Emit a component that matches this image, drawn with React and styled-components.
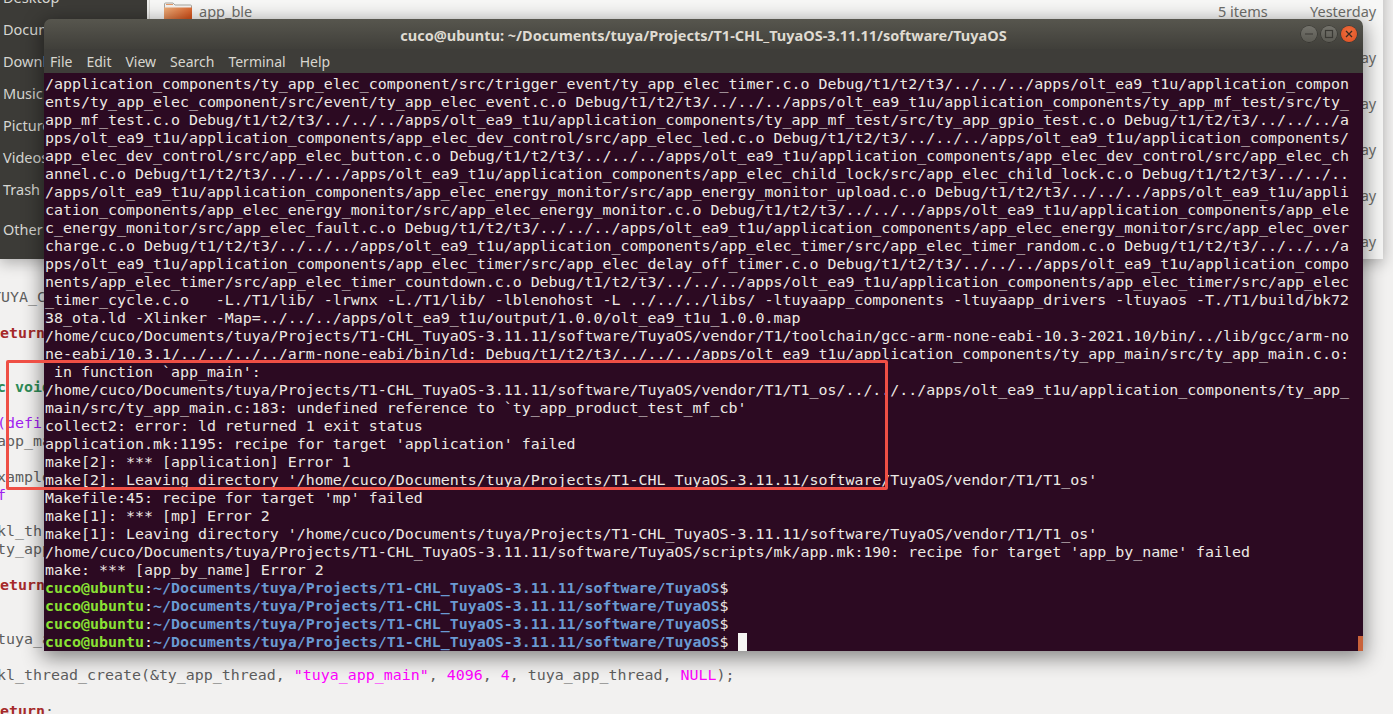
import React from "react";
import styled, { createGlobalStyle } from "styled-components";

const MONO = `"DejaVu Sans Mono", "Liberation Mono", monospace`;
const UI = `"Noto Sans", "Open Sans", sans-serif`;

const Global = createGlobalStyle`
  html, body { margin: 0; padding: 0; }
  body { width: 1393px; height: 714px; overflow: hidden; background: #f2f1f0; }
`;

const Desktop = styled.div`
  position: relative;
  width: 1393px;
  height: 714px;
  overflow: hidden;
  background: #f2f1f0;
`;

/* ---------- code editor behind everything ---------- */
const Editor = styled.div`
  position: absolute;
  left: -3px;
  top: 252px;
  width: 900px;
  font: 14.95px/18px ${MONO};
  color: #5e5e5e;
  white-space: pre;
`;
const CodeLine = styled.div`
  height: 18px;
  margin-left: ${(p) => p.$indent || 0}px;
`;
const Kw = styled.span`
  color: ${(p) => p.$c};
  font-weight: ${(p) => (p.$b ? 700 : 400)};
`;

/* ---------- file manager ---------- */
const Files = styled.div`
  position: absolute;
  left: 0;
  top: -23px;
  width: 1383px;
  height: 282px;
  display: flex;
  box-shadow: 0 4px 14px rgba(0, 0, 0, 0.28);
  background: #f0f0ee;
`;
const Sidebar = styled.div`
  width: 147px;
  flex: none;
  background: #3c3b37;
  color: #d6d6d2;
  font: 14.5px/20px ${UI};
  padding: 4px 0 0 3px;
  box-sizing: border-box;
`;
const Place = styled.div`
  height: 32px;
  line-height: 32px;
  margin-top: ${(p) => p.$gap || 0}px;
`;
const FileList = styled.div`
  flex: 1;
  background: #f7f7f6;
  margin-left: 2px;
  padding-top: 11px;
  border-left: 1px solid #d8d7d3;
  font: 14.5px/46px ${UI};
  color: #6f6f6b;
`;
const FileRow = styled.div`
  height: 46px;
  display: flex;
  align-items: center;
  padding-left: 13px;
`;
const FileName = styled.span`
  margin-left: 6px;
  flex: 1;
`;
const FileSize = styled.span`
  width: 92px;
`;
const FileDate = styled.span`
  width: 73px;
`;

/* ---------- terminal ---------- */
const Terminal = styled.div`
  position: absolute;
  left: 44px;
  top: 19px;
  width: 1319px;
  height: 632px;
  display: flex;
  flex-direction: column;
  border-radius: 7px 7px 0 0;
  overflow: hidden;
`;
const TerminalShadow = styled.div`
  position: absolute;
  left: 44px;
  top: 19px;
  width: 1319px;
  height: 632px;
  border-radius: 7px 7px 0 0;
  box-shadow: 0 5px 20px 2px rgba(0, 0, 0, 0.45);
`;
const TitleBar = styled.div`
  height: 30px;
  flex: none;
  display: flex;
  align-items: center;
  justify-content: center;
  position: relative;
  background: linear-gradient(#57564e, #403f3a);
  color: #dfdbd2;
  font: 700 14.5px ${UI};
  padding-top: 1px;
  box-sizing: border-box;
`;
const WindowButtons = styled.div`
  position: absolute;
  right: 6px;
  top: 7px;
  display: flex;
  gap: 4px;
`;
const WinBtn = styled.div`
  width: 16px;
  height: 16px;
  border-radius: 50%;
  display: flex;
  align-items: center;
  justify-content: center;
  background: ${(p) => (p.$close ? "radial-gradient(circle at 50% 40%, #f0703f, #dd4d20)" : "linear-gradient(#74736c, #5b5a53)")};
  box-shadow: 0 0 0 0.5px rgba(0, 0, 0, 0.4);
`;
const MenuBar = styled.div`
  height: 24px;
  flex: none;
  display: flex;
  align-items: center;
  gap: 14px;
  padding-left: 6px;
  background: #3e3d39;
  color: #d8d6cf;
  font: 14px ${UI};
`;
const Screen = styled.div`
  flex: 1;
  position: relative;
  background: #2c0a22;
  padding: 2px 0 0 1px;
  color: #ece9e4;
  font: 14.95px/18px ${MONO};
  white-space: pre;
  overflow: hidden;
`;
const Line = styled.div`
  height: 18px;
`;
const PromptUser = styled.span`
  color: #8ae234;
  font-weight: 700;
`;
const PromptPath = styled.span`
  color: #6a9ad2;
  font-weight: 700;
`;
const Cursor = styled.span`
  display: inline-block;
  width: 9px;
  height: 18px;
  margin-left: 9px;
  vertical-align: top;
  background: #f4f4f2;
`;
const ScrollThumb = styled.div`
  position: absolute;
  right: 0;
  bottom: 0;
  width: 5px;
  height: 15px;
  background: #c9623a;
`;

/* ---------- annotation on top of the screenshot ---------- */
const RedBox = styled.div`
  position: absolute;
  left: 6px;
  top: 360px;
  width: 882px;
  height: 130px;
  box-sizing: border-box;
  border: 3px solid #ef4f45;
  border-radius: 2px;
`;

const LINES = [
  "/application_components/ty_app_elec_component/src/trigger_event/ty_app_elec_timer.c.o Debug/t1/t2/t3/../../../apps/olt_ea9_t1u/application_compon",
  "ents/ty_app_elec_component/src/event/ty_app_elec_event.c.o Debug/t1/t2/t3/../../../apps/olt_ea9_t1u/application_components/ty_app_mf_test/src/ty_",
  "app_mf_test.c.o Debug/t1/t2/t3/../../../apps/olt_ea9_t1u/application_components/ty_app_mf_test/src/ty_app_gpio_test.c.o Debug/t1/t2/t3/../../../a",
  "pps/olt_ea9_t1u/application_components/app_elec_dev_control/src/app_elec_led.c.o Debug/t1/t2/t3/../../../apps/olt_ea9_t1u/application_components/",
  "app_elec_dev_control/src/app_elec_button.c.o Debug/t1/t2/t3/../../../apps/olt_ea9_t1u/application_components/app_elec_dev_control/src/app_elec_ch",
  "annel.c.o Debug/t1/t2/t3/../../../apps/olt_ea9_t1u/application_components/app_elec_child_lock/src/app_elec_child_lock.c.o Debug/t1/t2/t3/../../..",
  "/apps/olt_ea9_t1u/application_components/app_elec_energy_monitor/src/app_energy_monitor_upload.c.o Debug/t1/t2/t3/../../../apps/olt_ea9_t1u/appli",
  "cation_components/app_elec_energy_monitor/src/app_elec_energy_monitor.c.o Debug/t1/t2/t3/../../../apps/olt_ea9_t1u/application_components/app_ele",
  "c_energy_monitor/src/app_elec_fault.c.o Debug/t1/t2/t3/../../../apps/olt_ea9_t1u/application_components/app_elec_energy_monitor/src/app_elec_over",
  "charge.c.o Debug/t1/t2/t3/../../../apps/olt_ea9_t1u/application_components/app_elec_timer/src/app_elec_timer_random.c.o Debug/t1/t2/t3/../../../a",
  "pps/olt_ea9_t1u/application_components/app_elec_timer/src/app_elec_delay_off_timer.c.o Debug/t1/t2/t3/../../../apps/olt_ea9_t1u/application_compo",
  "nents/app_elec_timer/src/app_elec_timer_countdown.c.o Debug/t1/t2/t3/../../../apps/olt_ea9_t1u/application_components/app_elec_timer/src/app_elec",
  "_timer_cycle.c.o   -L./T1/lib/ -lrwnx -L./T1/lib/ -lblenohost -L ../../../libs/ -ltuyaapp_components -ltuyaapp_drivers -ltuyaos -T./T1/build/bk72",
  "38_ota.ld -Xlinker -Map=../../../apps/olt_ea9_t1u/output/1.0.0/olt_ea9_t1u_1.0.0.map",
  "/home/cuco/Documents/tuya/Projects/T1-CHL_TuyaOS-3.11.11/software/TuyaOS/vendor/T1/toolchain/gcc-arm-none-eabi-10.3-2021.10/bin/../lib/gcc/arm-no",
  "ne-eabi/10.3.1/../../../../arm-none-eabi/bin/ld: Debug/t1/t2/t3/../../../apps/olt_ea9_t1u/application_components/ty_app_main/src/ty_app_main.c.o:",
  " in function `app_main':",
  "/home/cuco/Documents/tuya/Projects/T1-CHL_TuyaOS-3.11.11/software/TuyaOS/vendor/T1/T1_os/../../../apps/olt_ea9_t1u/application_components/ty_app_",
  "main/src/ty_app_main.c:183: undefined reference to `ty_app_product_test_mf_cb'",
  "collect2: error: ld returned 1 exit status",
  "application.mk:1195: recipe for target 'application' failed",
  "make[2]: *** [application] Error 1",
  "make[2]: Leaving directory '/home/cuco/Documents/tuya/Projects/T1-CHL_TuyaOS-3.11.11/software/TuyaOS/vendor/T1/T1_os'",
  "Makefile:45: recipe for target 'mp' failed",
  "make[1]: *** [mp] Error 2",
  "make[1]: Leaving directory '/home/cuco/Documents/tuya/Projects/T1-CHL_TuyaOS-3.11.11/software/TuyaOS/vendor/T1/T1_os'",
  "/home/cuco/Documents/tuya/Projects/T1-CHL_TuyaOS-3.11.11/software/TuyaOS/scripts/mk/app.mk:190: recipe for target 'app_by_name' failed",
  "make: *** [app_by_name] Error 2",
];

const PATH = "~/Documents/tuya/Projects/T1-CHL_TuyaOS-3.11.11/software/TuyaOS";
const PLACES = [
  ["Desktop", 0],
  ["Documents", 0],
  ["Downloads", 0],
  ["Music", 0],
  ["Pictures", 0],
  ["Videos", 0],
  ["Trash", 0],
  ["Other Locations", 8],
];
const MENUS = ["File", "Edit", "View", "Search", "Terminal", "Help"];

const Folder = () => (
  <svg width="30" height="20" viewBox="0 0 30 20">
    <defs>
      <linearGradient id="fold" x1="0" y1="0" x2="1" y2="0.6">
        <stop offset="0" stopColor="#eeb07c" />
        <stop offset="1" stopColor="#d6561f" />
      </linearGradient>
    </defs>
    <path d="M1.5 8 V3 Q1.5 2 2.5 2 H10 L12 4 H27.5 Q28.5 4 28.5 5 V8 Z" fill="#f4f3f1" stroke="#a9a69f" />
    <path d="M3 3.5 H10" stroke="#e49a68" strokeWidth="1" />
    <path d="M1 6.5 H29 V18 Q29 19.5 27.5 19.5 H2.5 Q1 19.5 1 18 Z" fill="url(#fold)" />
  </svg>
);

export default function App() {
  return (
    <Desktop>
      <Global />
      <Editor>
        <CodeLine $indent={-5}><Kw $c="#a020f0">f</Kw></CodeLine>
        <CodeLine />
        <CodeLine $indent={-5}>TUYA_CFG</CodeLine>
        <CodeLine />
        <CodeLine $indent={-6}><Kw $c="#a52a2a" $b>return</Kw></CodeLine>
        <CodeLine />
        <CodeLine />
        <CodeLine><Kw $c="#2e8b57" $b>c void</Kw></CodeLine>
        <CodeLine />
        <CodeLine><Kw $c="#a020f0">(defi</Kw></CodeLine>
        <CodeLine>app_main</CodeLine>
        <CodeLine />
        <CodeLine $indent={-9}>example</CodeLine>
        <CodeLine><Kw $c="#a020f0">f</Kw></CodeLine>
        <CodeLine />
        <CodeLine>kl_thread</CodeLine>
        <CodeLine>ty_app</CodeLine>
        <CodeLine />
        <CodeLine $indent={-6}><Kw $c="#a52a2a" $b>return</Kw></CodeLine>
        <CodeLine />
        <CodeLine />
        <CodeLine>tuya_app</CodeLine>
        <CodeLine />
        <CodeLine>
          {"kl_thread_create(&ty_app_thread, "}
          <Kw $c="#ff00ff">"tuya_app_main"</Kw>, <Kw $c="#ff00ff">4096</Kw>, <Kw $c="#ff00ff">4</Kw>
          {", tuya_app_thread, "}
          <Kw $c="#ff00ff">NULL</Kw>);
        </CodeLine>
        <CodeLine />
        <CodeLine $indent={-6}><Kw $c="#a52a2a" $b>return</Kw>;</CodeLine>
      </Editor>

      <Files>
        <Sidebar>
          {PLACES.map(([name, gap]) => (
            <Place key={name} $gap={gap}>{name}</Place>
          ))}
        </Sidebar>
        <FileList>
          <FileRow>
            <Folder />
            <FileName>app_ble</FileName>
            <FileSize>5 items</FileSize>
            <FileDate>Yesterday</FileDate>
          </FileRow>
          {[1, 2, 3, 4, 5].map((n) => (
            <FileRow key={n}>
              <FileName />
              <FileSize>5 items</FileSize>
              <FileDate>Yesterday</FileDate>
            </FileRow>
          ))}
        </FileList>
      </Files>

      <TerminalShadow />
      <Terminal>
        <TitleBar>
          cuco@ubuntu: ~/Documents/tuya/Projects/T1-CHL_TuyaOS-3.11.11/software/TuyaOS
          <WindowButtons>
            <WinBtn>
              <svg width="10" height="10" viewBox="0 0 10 10"><path d="M1 5 H9" stroke="#3a3934" strokeWidth="1.2" /></svg>
            </WinBtn>
            <WinBtn>
              <svg width="10" height="10" viewBox="0 0 10 10"><rect x="1.5" y="1.5" width="7" height="7" fill="none" stroke="#3a3934" strokeWidth="1.2" /></svg>
            </WinBtn>
            <WinBtn $close>
              <svg width="10" height="10" viewBox="0 0 10 10"><path d="M2 2 L8 8 M8 2 L2 8" stroke="#3a2a20" strokeWidth="1.3" /></svg>
            </WinBtn>
          </WindowButtons>
        </TitleBar>
        <MenuBar>
          {MENUS.map((m) => (
            <span key={m}>{m}</span>
          ))}
        </MenuBar>
        <Screen>
          {LINES.map((l, i) => (
            <Line key={i}>{l}</Line>
          ))}
          {[0, 1, 2, 3].map((i) => (
            <Line key={i}>
              <PromptUser>cuco@ubuntu</PromptUser>:<PromptPath>{PATH}</PromptPath>$
              {i === 3 && <Cursor />}
            </Line>
          ))}
          <ScrollThumb />
        </Screen>
      </Terminal>

      <RedBox />
    </Desktop>
  );
}
